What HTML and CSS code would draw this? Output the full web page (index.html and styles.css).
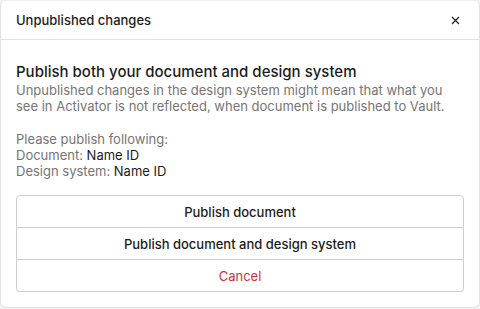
FILE: index.html
```html
<!DOCTYPE html>
<html>
    <head>
        <title>Unpublished changes</title>
        <link rel="stylesheet" href="styles.css">
    </head>
    <body>
        <div class = "dialog">
            <div class = "header">
                <span class = "title">Unpublished changes</span>
                <button class = "close" type = "button">
                    <svg width="9" height="9" viewBox="0 0 9 9">
                        <path d="M1 1 L8 8 M8 1 L1 8" stroke="#222" stroke-width="1.2" fill="none"/>
                    </svg>
                </button>
            </div>

            <div class = "content">
                <p class = "heading">Publish both your document and design system</p>
                <p class = "text">Unpublished changes in the design system might mean that what you see in Activator is not reflected, when document is published to Vault.</p>
                <p class = "text list">
                    Please publish following:<br>
                    Document: <span class = "name">Name ID</span><br>
                    Design system: <span class = "name">Name ID</span>
                </p>

                <div class = "actions">
                    <button type = "button">Publish document</button>
                    <button type = "button">Publish document and design system</button>
                    <button class = "cancel" type = "button">Cancel</button>
                </div>
            </div>
        </div>
    </body>
</html>
```

FILE: styles.css
```css
body {
    background-color: #f4f4f4;
    font-family: Inter, "Liberation Sans", sans-serif;
    margin: 0;
}

p {
    margin: 0;
}

.dialog {
    background-color: white;
    border: 1px solid #e2e2e2;
    border-top-color: #f0f0f0;
    border-radius: 6px;
    box-sizing: border-box;
    height: 308px;
    width: 480px;
}

.header {
    align-items: center;
    border-bottom: 1px solid #e2e2e2;
    display: flex;
    height: 38px;
    justify-content: space-between;
    padding: 0 19px 0 15px;
}

.title {
    color: #1c1c1c;
    font-size: 13px;
    font-weight: 500;
}

.close {
    background: none;
    border: none;
    display: flex;
    padding: 0;
}

.content {
    padding: 22px 15px 0;
}

.heading {
    color: #1c1c1c;
    font-size: 15px;
    font-weight: 500;
    line-height: 20px;
}

.text {
    color: #757575;
    font-size: 13px;
    line-height: 16px;
}

.list {
    margin-top: 17px;
}

.name {
    color: #1c1c1c;
}

.actions {
    border: 1px solid #cfcfcf;
    border-radius: 4px;
    display: flex;
    flex-direction: column;
    margin-top: 16px;
}

.actions button {
    background: none;
    border: none;
    border-top: 1px solid #cfcfcf;
    color: #1c1c1c;
    font-family: inherit;
    font-size: 13px;
    font-weight: 500;
    height: 32px;
}

.actions button:first-child {
    border-top: none;
    height: 31px;
}

.actions .cancel {
    color: #d2313a;
    font-weight: 400;
}
```
